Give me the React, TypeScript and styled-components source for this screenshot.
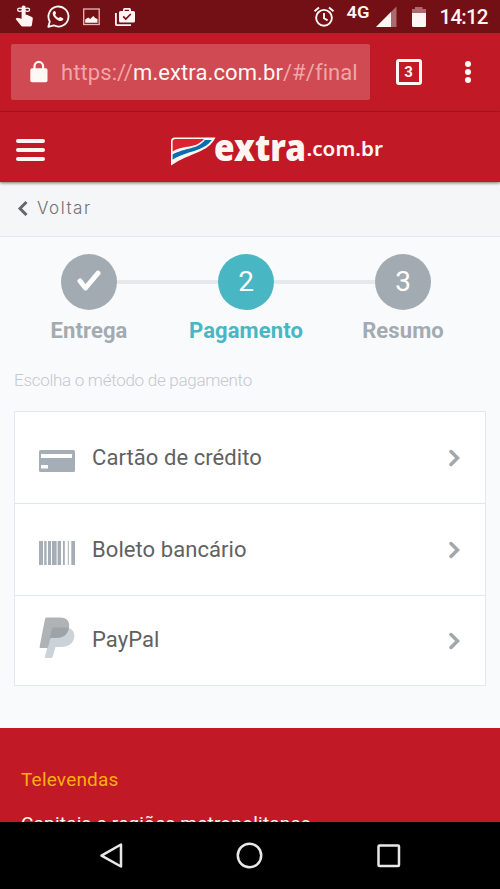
import React from 'react';
import styled, { createGlobalStyle } from 'styled-components';

const Global = createGlobalStyle`
  * { box-sizing: border-box; }
  html, body { margin: 0; padding: 0; }
  body { font-family: Roboto, "Liberation Sans", sans-serif; background: #f9fafc; overflow: hidden; }
  svg { display: block; flex: none; }
`;

const Screen = styled.div`
  width: 500px;
  height: 889px;
  display: flex;
  flex-direction: column;
  overflow: hidden;
  background: #f9fafc;
`;

const StatusBar = styled.header`
  height: 33px;
  flex: none;
  display: flex;
  align-items: center;
  justify-content: space-between;
  background: #731016;
  color: #fff5f3;
`;

const BrowserBar = styled.div`
  height: 79px;
  flex: none;
  display: flex;
  align-items: center;
  padding: 0 0 1px 11px;
  background: #c21926;
  border-bottom: 1px solid #b01622;
`;

const AddressField = styled.div`
  width: 358.5px;
  height: 56px;
  display: flex;
  align-items: center;
  padding-left: 19px;
  border-radius: 2px;
  background: #cf4a53;
`;

const Url = styled.span`
  margin: 3px 0 0 13px;
  font-size: 22px;
  line-height: 28px;
  letter-spacing: 0.09px;
  white-space: nowrap;
  color: #f1a6a6;
`;

const Host = styled.span`
  color: #fff8f5;
`;

const TabCount = styled.div`
  width: 26px;
  height: 26px;
  margin: 1px 0 0 26px;
  display: flex;
  align-items: center;
  justify-content: center;
  border: 3px solid #fff8f5;
  border-radius: 3px;
  font-size: 15px;
  font-weight: 700;
  color: #fff8f5;
`;

const MenuDots = styled.div`
  display: flex;
  flex-direction: column;
  gap: 2.4px;
  margin: 1px 0 0 43.5px;
`;

const Dot = styled.i`
  width: 6px;
  height: 6px;
  border-radius: 50%;
  background: #fff8f5;
`;

const SiteHeader = styled.div`
  height: 70px;
  flex: none;
  display: flex;
  align-items: center;
  padding: 6px 0 0 16px;
  background: #c21926;
  box-shadow: 0 1px 3px rgba(0, 0, 0, 0.55);
  z-index: 1;
`;

const Burger = styled.div`
  width: 29px;
  display: flex;
  flex-direction: column;
  gap: 5px;
  margin-right: 125px;
`;

const BurgerLine = styled.i`
  height: 4px;
  border-radius: 2px;
  background: #fff6f3;
`;

const BackBar = styled.nav`
  height: 55px;
  flex: none;
  display: flex;
  align-items: center;
  gap: 9px;
  padding: 0 0 3px 17px;
  background: #f5f6f8;
  border-bottom: 1px solid #e3e7ea;
`;

const BackLabel = styled.span`
  font-family: Inter, "Open Sans", sans-serif;
  font-size: 17px;
  line-height: 24px;
  font-weight: 300;
  letter-spacing: 1.5px;
  color: #707174;
`;

const Content = styled.main`
  height: 491px;
  flex: none;
`;

const Steps = styled.ol`
  display: grid;
  grid-template-columns: repeat(3, 157px);
  margin: 0;
  padding: 17px 0 0 10.5px;
  list-style: none;
`;

const Step = styled.li<{ $active?: boolean }>`
  display: flex;
  flex-direction: column;
  align-items: center;
  color: ${p => (p.$active ? '#48b7c3' : '#a3abb2')};
`;

const StepTrack = styled.div`
  width: 100%;
  display: flex;
  align-items: center;
`;

const Connector = styled.span<{ $hidden?: boolean }>`
  flex: 1;
  height: 4px;
  background: ${p => (p.$hidden ? 'transparent' : '#e5e9ec')};
`;

const StepCircle = styled.div`
  width: 56px;
  height: 56px;
  display: flex;
  align-items: center;
  justify-content: center;
  border-radius: 50%;
  background: currentColor;
`;

const StepNumber = styled.span`
  font-size: 28px;
  line-height: 56px;
  margin-top: -1px;
  color: #fff;
`;

const StepLabel = styled.span`
  margin-top: 6.5px;
  font-size: 22px;
  line-height: 28px;
  font-weight: 700;
  letter-spacing: 0.1px;
`;

const Prompt = styled.p`
  margin: 24.5px 0 0 14px;
  font-size: 17px;
  line-height: 22px;
  font-weight: 300;
  letter-spacing: -0.28px;
  white-space: nowrap;
  color: #c5c8ce;
`;

const Methods = styled.ul`
  width: 472px;
  margin: 20px 0 0 14px;
  padding: 0;
  list-style: none;
  background: #fff;
  border: 1px solid #e3e8ed;
`;

const Method = styled.li<{ $height: number }>`
  height: ${p => p.$height}px;
  display: flex;
  align-items: center;
  padding: 0 25px 0 24px;
  & + & { border-top: 1px solid #e1e6eb; }
`;

const MethodIcon = styled.span<{ $drop: number }>`
  width: 36px;
  display: flex;
  margin: ${p => p.$drop}px 17px 0 0;
`;

const MethodLabel = styled.span<{ $raised?: boolean }>`
  flex: 1;
  margin-bottom: ${p => (p.$raised ? 2 : 0)}px;
  font-size: 22px;
  line-height: 28px;
  letter-spacing: 0.07px;
  color: #616161;
`;

const Footer = styled.footer`
  height: 94px;
  flex: none;
  padding: 39px 21px 0;
  overflow: hidden;
  background: #c21926;
`;

const FooterTitle = styled.h2`
  margin: 0;
  font-size: 19px;
  line-height: 26px;
  font-weight: 400;
  letter-spacing: 0.2px;
  color: #fbb00f;
`;

const FooterText = styled.p`
  margin: 18px 0 0;
  font-size: 19px;
  line-height: 26px;
  font-weight: 400;
  letter-spacing: 0.2px;
  white-space: nowrap;
  color: #fff5f3;
`;

const NavBar = styled.div`
  height: 67px;
  flex: none;
  display: flex;
  justify-content: space-between;
  padding: 20px 99px 0 98.5px;
  background: #000;
`;

const StatusSvg = styled.svg`
  font-family: Roboto, sans-serif;
`;

const LogoSvg = styled.svg`
  overflow: visible;
  margin-top: 6px;
  font-family: "Noto Sans", "Open Sans", sans-serif;
`;

const NotificationIcons = () => (
  <StatusSvg width="150" height="33" fill="#fff5f3">
    <g transform="translate(11.5 3.6) scale(1.01)">
      <path d="M20.2 14.2l-5-2.2H14V5c0-1.3-.8-2-2-2s-2 .8-2 2v11l-4.5-1-1.4 1.3 5.2 6.5c.5.6 1 .9 1.8.9h7.2c1 0 1.7-.6 1.9-1.6l.9-6c.1-.9-.2-1.5-.9-1.9z" transform="translate(0 -1)" />
      <path d="M12 6c-2-2.3-5.9-2-5.9 0s3.9 2.3 5.9 0zm0 0c2-2.3 5.9-2 5.9 0s-3.9 2.3-5.9 0z" fill="none" stroke="#fff5f3" strokeWidth="1.2" />
    </g>
    <path d="M48.3 26.8l1.5-5.3A10 10 0 1 1 53.7 25.3z" fill="none" stroke="#fff5f3" strokeWidth="1.8" strokeLinejoin="round" />
    <path d="M55.4 11.5c-.5-.7-1-.7-1.7-.2-2 1.7-.6 5 1.8 7.2 2.3 2.2 5.4 3.5 7.2 1.8.8-.8.8-1.6.2-2l-2.4-1.3c-.6-.2-.9.2-1.6 1.1-1.9-.7-3-1.9-3.8-3.4.8-.8 1.1-1.2.9-1.7z" />
    <rect x="83.7" y="9" width="15.5" height="15.5" fill="none" stroke="#eab7b8" strokeWidth="1.3" />
    <path d="M85.2 22.8v-3.2l3-2 2 1.3 3-3 2 2 2.3 1v3.9z" />
    <path d="M120.5 11h2.5V9.5q0-1.5 1.5-1.5h5q1.5 0 1.5 1.5V11h2.5q1.5 0 1.5 1.5v8.5q0 1.5-1.5 1.5h-13q-1.5 0-1.5-1.5V12.5q0-1.5 1.5-1.5zM124.7 11h4.3V9.7h-4.3z" fillRule="evenodd" />
    <path d="M123.2 16.4l2.6 2.6 5-5" fill="none" stroke="#731016" strokeWidth="1.7" />
    <path d="M115.9 13v11.2q0 1 1 1H131" fill="none" stroke="#fff5f3" strokeWidth="1.8" />
  </StatusSvg>
);

const SystemIcons = () => (
  <StatusSvg width="190" height="33" fill="#fff5f3">
    <g fill="none" stroke="#fff5f3" strokeWidth="1.9">
      <circle cx="14" cy="17.8" r="7.9" />
      <path d="M4.5 11.2l4.5-3.7M19 7.5l4.5 3.7M14 13v5.2l3.6 2.2" />
    </g>
    <text x="36.5" y="18" fontSize="17" fontWeight="600" textLength="23" lengthAdjust="spacingAndGlyphs">4G</text>
    <path d="M66 27L86.5 6.5V27z" opacity=".4" />
    <path d="M66 27L81 12V27z" />
    <path d="M102 13V9h3V7h7.5v2h3.5v4z" opacity=".4" />
    <path d="M102 13h14v12.5q0 1.5-1.5 1.5h-11q-1.5 0-1.5-1.5z" />
    <text x="129.5" y="24.3" fontSize="20.5" fontWeight="500" textLength="49">14:12</text>
  </StatusSvg>
);

const LockIcon = () => (
  <svg width="18" height="24" viewBox="0 0 18 24" fill="#fff8f5">
    <path d="M4.5 9V6.2a4.3 4.3 0 0 1 8.6 0V9" fill="none" stroke="#fff8f5" strokeWidth="2.2" />
    <rect x=".3" y="8.3" width="17.2" height="14" rx="1.8" />
  </svg>
);

const Logo = () => (
  <LogoSvg width="216" height="38" viewBox="0 0 216 38">
    <path d="M1 31.5V7.5Q1 3.5 5 3.5H45.5C38 19 21 18 1 31.5z" fill="#fff6f3" />
    <path d="M2.6 17.5V7.8Q2.6 5 5.5 5H34C26 15 14 10.5 2.6 17.5z" fill="#dc2430" />
    <path d="M2.6 20.5C15 13.5 28 15.5 34.8 6H41.8C33 18 17 16.5 2.6 25.7z" fill="#086fad" />
    <text x="44" y="27.2" fontSize="37" fontWeight="900" fill="#fff6f3" textLength="92" lengthAdjust="spacingAndGlyphs">extra</text>
    <text x="136.5" y="22.3" fontSize="20.5" fontWeight="600" fill="#fff6f3" textLength="76.5" lengthAdjust="spacingAndGlyphs">.com.br</text>
  </LogoSvg>
);

const Check = () => (
  <svg width="26" height="24" fill="none" stroke="#fff" strokeWidth="5" strokeLinecap="round" strokeLinejoin="round">
    <path d="M4 11l5.5 7L22 3.2" />
  </svg>
);

const CardIcon = () => (
  <svg width="36" height="22">
    <rect width="36" height="22" rx="1.5" fill="#a5aeb6" />
    <path d="M2 4h31v4H2zM2 15h7v3.6H2z" fill="#fff" />
  </svg>
);

const BARS = [[0, 4], [5.2, 2.4], [9, 3], [13, 4.6], [18.6, 3.4], [24, 1.8], [28.8, 1], [32.3, 3.7]];

const BarcodeIcon = () => (
  <svg width="36" height="24" fill="#a5aeb6">
    {BARS.map(([x, w]) => <rect key={x} x={x} width={w} height="24" />)}
  </svg>
);

const PaypalIcon = () => (
  <svg width="36" height="42" viewBox="0 0 36 42">
    <path d="M13 11H28.5C34 11.5 37 17 34.5 23C32 28.5 27 30 20 30H16.5L13.8 39.6Q13.5 41 12 41H7Q5.7 41 6 39.6z" fill="#cbd3d8" />
    <path d="M7.5.5H21C28 .5 31.5 5 29.8 11.5C28 18 23.5 21 17 21H11.5L9.2 29.8Q8.9 31 7.7 31H1.5Q.3 31 .6 29.8L6 2Q6.3.5 7.5.5z" fill="#b0b3b6" />
    <path d="M13 11.5Q13.3 10.5 14.5 10.5H30C29 17.5 24 21 17 21H11.5L10.5 22z" fill="#9ca4aa" />
  </svg>
);

const Chevron = () => (
  <svg width="11" height="18" fill="none" stroke="#a0a8ae" strokeWidth="3.5" strokeLinecap="round">
    <path d="M2 2.5L8.5 9L2 15.5" />
  </svg>
);

const methods = [
  { label: 'Cartão de crédito', Icon: CardIcon, height: 91, drop: 7 },
  { label: 'Boleto bancário', Icon: BarcodeIcon, height: 92, drop: 7 },
  { label: 'PayPal', Icon: PaypalIcon, height: 90, drop: -6, raised: true },
];

export default function App() {
  return (
    <>
      <Global />
      <Screen>
        <StatusBar>
          <NotificationIcons />
          <SystemIcons />
        </StatusBar>
        <BrowserBar>
          <AddressField>
            <LockIcon />
            <Url>https://<Host>m.extra.com.br</Host>/#/final</Url>
          </AddressField>
          <TabCount>3</TabCount>
          <MenuDots><Dot /><Dot /><Dot /></MenuDots>
        </BrowserBar>
        <SiteHeader>
          <Burger><BurgerLine /><BurgerLine /><BurgerLine /></Burger>
          <Logo />
        </SiteHeader>
        <BackBar>
          <svg width="11" height="16" fill="none" stroke="#65676a" strokeWidth="3">
            <path d="M9.5 2L3 8.5L9.5 15" />
          </svg>
          <BackLabel>Voltar</BackLabel>
        </BackBar>
        <Content>
          <Steps>
            <Step>
              <StepTrack><Connector $hidden /><StepCircle><Check /></StepCircle><Connector /></StepTrack>
              <StepLabel>Entrega</StepLabel>
            </Step>
            <Step $active>
              <StepTrack><Connector /><StepCircle><StepNumber>2</StepNumber></StepCircle><Connector /></StepTrack>
              <StepLabel>Pagamento</StepLabel>
            </Step>
            <Step>
              <StepTrack><Connector /><StepCircle><StepNumber>3</StepNumber></StepCircle><Connector $hidden /></StepTrack>
              <StepLabel>Resumo</StepLabel>
            </Step>
          </Steps>
          <Prompt>Escolha o método de pagamento</Prompt>
          <Methods>
            {methods.map(({ label, Icon, height, drop, raised }) => (
              <Method key={label} $height={height}>
                <MethodIcon $drop={drop}><Icon /></MethodIcon>
                <MethodLabel $raised={raised}>{label}</MethodLabel>
                <Chevron />
              </Method>
            ))}
          </Methods>
        </Content>
        <Footer>
          <FooterTitle>Televendas</FooterTitle>
          <FooterText>Capitais e regiões metropolitanas</FooterText>
        </Footer>
        <NavBar>
          <svg width="25" height="28" fill="none" stroke="#e8e8e8" strokeWidth="2.5" strokeLinejoin="round">
            <path d="M22 2.5V24.5L2.5 13.7z" />
          </svg>
          <svg width="28" height="28" fill="none" stroke="#e8e8e8" strokeWidth="2.5">
            <circle cx="13.5" cy="13.5" r="11.7" />
          </svg>
          <svg width="24" height="28" fill="none" stroke="#e8e8e8" strokeWidth="2.5">
            <rect x="1.5" y="3.5" width="20.5" height="20.5" rx="1" />
          </svg>
        </NavBar>
      </Screen>
    </>
  );
}
